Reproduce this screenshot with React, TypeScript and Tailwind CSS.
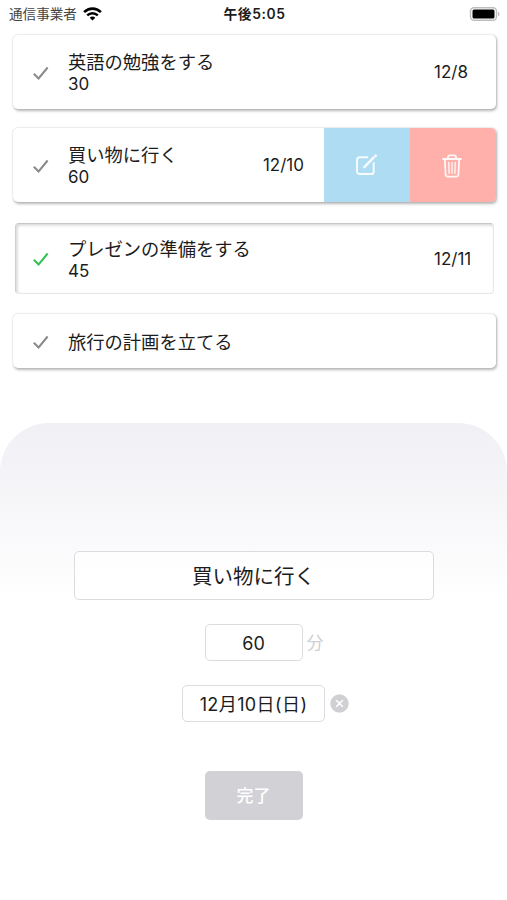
type Task = {
  title: string;
  minutes?: string;
  date?: string;
  done?: boolean;
  swiped?: boolean;
};

const tasks: Task[] = [
  { title: "英語の勉強をする", minutes: "30", date: "12/8" },
  { title: "買い物に行く", minutes: "60", date: "12/10", swiped: true },
  { title: "プレゼンの準備をする", minutes: "45", date: "12/11", done: true },
  { title: "旅行の計画を立てる" },
];

function StatusBar() {
  return (
    <header className="grid h-[28px] grid-cols-3 items-center pl-[9px] pr-[7px]">
      <div className="flex items-center gap-[6px]">
        <span className="whitespace-nowrap pt-px text-[13.6px] leading-none text-[#444]">
          通信事業者
        </span>
        <svg width="19" height="14" viewBox="0 0 19 14" fill="none" stroke="#000">
          <path d="M1.1 5.1C5.9.5 13.1.5 17.9 5.1" strokeWidth="2.6" />
          <path d="M4.2 8.4C7.2 5.5 11.8 5.5 14.8 8.4" strokeWidth="2.4" />
          <path
            d="M6.7 10.7c1.6-1.5 4-1.5 5.6 0L9.5 13.5z"
            fill="#000"
            stroke="none"
          />
        </svg>
      </div>
      <span className="whitespace-nowrap pt-px text-center text-[13.8px] font-semibold leading-none tracking-[0.6px]">
        午後5:05
      </span>
      <svg className="justify-self-end" width="31" height="15" viewBox="0 0 31 15">
        <rect
          x="1.5"
          y="0.7"
          width="26"
          height="12.6"
          rx="3.5"
          fill="#fff"
          stroke="#bdbdbd"
          strokeWidth="1.4"
        />
        <rect x="3.5" y="2.5" width="22" height="9" rx="1.5" fill="#000" />
        <path d="M29 4.7c2 .7 2 3.9 0 4.6z" fill="#bdbdbd" />
      </svg>
    </header>
  );
}

function CheckIcon({ done }: { done?: boolean }) {
  return (
    <svg
      className={done ? "" : "mt-px"}
      width="16"
      height="14"
      viewBox="0 0 16 14"
      fill="none"
      stroke={done ? "#2fc255" : "#8a8a8a"}
      strokeWidth="2"
    >
      <path d="M.8 7.7 5.6 12.5 14.6 1.5" />
    </svg>
  );
}

function EditIcon() {
  return (
    <svg
      width="22"
      height="22"
      viewBox="0 0 22 22"
      fill="none"
      stroke="#fff"
      strokeOpacity="0.88"
      strokeWidth="2"
      strokeLinecap="round"
      strokeLinejoin="round"
    >
      <path d="M12.5 3.3H4.6A2.6 2.6 0 0 0 2 5.9v11.5A2.6 2.6 0 0 0 4.6 20h11.5a2.6 2.6 0 0 0 2.6-2.6V9" />
      <path d="m9.3 13.2 9.3-9.5" strokeWidth="2.5" />
      <path d="m20.4 2 .3-.3" strokeWidth="2.5" />
    </svg>
  );
}

function TrashIcon() {
  return (
    <svg
      width="20"
      height="24"
      viewBox="0 0 20 24"
      fill="none"
      stroke="#fff"
      strokeOpacity="0.88"
      strokeWidth="1.8"
      strokeLinecap="round"
      strokeLinejoin="round"
    >
      <path d="M1 5h18M6 4.8V3c0-1 .7-1.7 1.7-1.7h4.6C13.3 1.3 14 2 14 3v1.8" />
      <path d="m2.8 5.2.8 15.3c.1 1.3.9 2.1 2.2 2.1h8.4c1.3 0 2.1-.8 2.2-2.1l.8-15.3" />
      <path d="m6.8 8.5.3 10.7M10 8.5v10.7M13.2 8.5l-.3 10.7" strokeWidth="1.4" />
    </svg>
  );
}

function TaskCard({ task }: { task: Task }) {
  const shape = task.done
    ? "mt-[2px] mb-px mx-[2px] h-[71px] pl-[17px] rounded-[4px] border border-[#e8e8e8] border-l-[#cfcfcf] border-t-[#c6c6c6] shadow-[inset_1.5px_1.5px_3px_rgba(0,0,0,0.16)]"
    : task.minutes
      ? "h-[74px] pl-5 rounded-[5px] shadow-[1px_1.5px_3px_rgba(0,0,0,0.28),0_0_2px_rgba(0,0,0,0.14)]"
      : "h-[54px] pl-5 rounded-[5px] shadow-[1px_1.5px_3px_rgba(0,0,0,0.28),0_0_2px_rgba(0,0,0,0.14)]";

  return (
    <li className={`flex items-center overflow-hidden bg-white ${shape}`}>
      <CheckIcon done={task.done} />
      <div className="ml-[19px] flex-1 pt-[2px] text-[18.3px] leading-[22px]">
        <p>{task.title}</p>
        {task.minutes && <p className="text-[17px]">{task.minutes}</p>}
      </div>
      {task.date && (
        <span
          className={`pt-px text-[17px] leading-none ${task.swiped ? "mr-5" : task.done ? "w-[59px]" : "w-[62px]"}`}
        >
          {task.date}
        </span>
      )}
      {task.swiped && (
        <div className="flex h-full">
          <button className="flex w-[86px] items-center justify-center bg-[#aedcf2] pr-[2px]">
            <EditIcon />
          </button>
          <button className="flex w-[86px] items-center justify-center bg-[#ffb0ab] pr-[2px] pt-px">
            <TrashIcon />
          </button>
        </div>
      )}
    </li>
  );
}

function TaskForm() {
  return (
    <section className="flex h-[477px] flex-col items-center rounded-t-[49px] bg-linear-to-b from-[#f0f0f5] to-white to-[180px] pt-[128px]">
      <div className="flex h-[49px] w-[360px] items-center justify-center rounded-[5px] border-[1.5px] border-[#dcdce0] bg-white/70 pt-[3px] text-[20.5px]">
        買い物に行く
      </div>
      <div className="mt-6 grid grid-cols-[1fr_98px_1fr] items-center">
        <div />
        <div className="flex h-[37px] items-center justify-center rounded-[5px] border-[1.5px] border-[#dcdce0] bg-white pt-px text-[18px]">
          60
        </div>
        <span className="ml-[4px] pt-[2px] text-[17px] text-[#d0d0d4]">分</span>
      </div>
      <div className="mt-6 grid grid-cols-[1fr_143px_1fr] items-center">
        <div />
        <div className="flex h-[37px] items-center justify-center whitespace-nowrap rounded-[5px] border-[1.5px] border-[#dcdce0] bg-white pt-[2px] text-[18px] tracking-[0.4px]">
          12月10日(日)
        </div>
        <svg className="ml-[5px]" width="19" height="19" viewBox="0 0 19 19">
          <circle cx="9.5" cy="9.5" r="9.2" fill="#d0d0d4" />
          <path d="m6.2 6.2 6.6 6.6m0-6.6-6.6 6.6" stroke="#fff" strokeWidth="1.6" />
        </svg>
      </div>
      <button className="mt-[49px] h-[49px] w-[98px] rounded-[5px] bg-[#d1d1d6] pt-[2px] text-[17px] font-medium text-white">
        完了
      </button>
    </section>
  );
}

export default function App() {
  return (
    <div className="h-[900px] w-[507px] overflow-hidden bg-white font-[Inter,'Noto_Sans_CJK_JP',sans-serif] text-[#1c1c1c]">
      <StatusBar />
      <ul className="flex h-[395px] flex-col gap-[19px] pt-[7px] pl-[13px] pr-[11px]">
        {tasks.map((task) => (
          <TaskCard key={task.title} task={task} />
        ))}
      </ul>
      <TaskForm />
    </div>
  );
}
